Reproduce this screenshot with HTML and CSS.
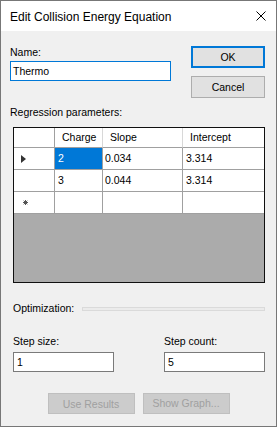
FILE: index.html
```html
<html>

<head>
    <link rel="stylesheet" href="styles.css">
</head>

<body>
    <div class="window">
        <div class="titlebar">
            <span class="title">Edit Collision Energy Equation</span>
            <svg class="close" width="10" height="10" viewBox="0 0 10 10">
                <path d="M0.5 0.5 L9.5 9.5 M9.5 0.5 L0.5 9.5" stroke="#000" stroke-width="1" fill="none" />
            </svg>
        </div>
        <div class="content">
            <div class="topRow">
                <div class="nameField">
                    <div class="label">Name:</div>
                    <div class="textbox focused">Thermo</div>
                </div>
                <div class="actions">
                    <div class="btn default">OK</div>
                    <div class="btn">Cancel</div>
                </div>
            </div>

            <div class="label regression">Regression parameters:</div>
            <div class="grid">
                <div class="gridRows">
                    <div class="row header">
                        <div class="cell rowHead"></div>
                        <div class="cell charge">Charge</div>
                        <div class="cell slope">Slope</div>
                        <div class="cell intercept">Intercept</div>
                    </div>
                    <div class="row">
                        <div class="cell rowHead"><span class="current"></span></div>
                        <div class="cell charge selected">2</div>
                        <div class="cell slope">0.034</div>
                        <div class="cell intercept">3.314</div>
                    </div>
                    <div class="row">
                        <div class="cell rowHead"></div>
                        <div class="cell charge">3</div>
                        <div class="cell slope">0.044</div>
                        <div class="cell intercept">3.314</div>
                    </div>
                    <div class="row">
                        <div class="cell rowHead">
                            <svg class="newRow" width="5" height="5" viewBox="0 0 5 5">
                                <path d="M2.5 0 V5 M0 2.5 H5 M0.7 0.7 L4.3 4.3 M4.3 0.7 L0.7 4.3" stroke="#555" stroke-width="1" />
                            </svg>
                        </div>
                        <div class="cell charge"></div>
                        <div class="cell slope"></div>
                        <div class="cell intercept"></div>
                    </div>
                </div>
            </div>

            <div class="optimization">
                <span class="label">Optimization:</span>
                <div class="rule"></div>
            </div>

            <div class="steps">
                <div class="stepField">
                    <div class="label">Step size:</div>
                    <div class="textbox">1</div>
                </div>
                <div class="stepField">
                    <div class="label">Step count:</div>
                    <div class="textbox">5</div>
                </div>
            </div>

            <div class="bottomButtons">
                <div class="btn disabled">Use Results</div>
                <div class="btn disabled graph">Show Graph...</div>
            </div>
        </div>
    </div>
</body>

</html>
```

FILE: styles.css
```css
body {
    margin: 0;
    padding: 0;
    font-family: "Liberation Sans", Arial, sans-serif;
    font-size: 10.5px;
    color: #000;
}

.window {
    width: 277px;
    height: 427px;
    box-sizing: border-box;
    border: 1px solid #777777;
    display: flex;
    flex-direction: column;
    background: #f0f0f0;
}

.titlebar {
    height: 30px;
    background: #fff;
    display: flex;
    align-items: center;
    padding: 0 10px 0 9px;
}

.title {
    font-family: "Liberation Sans", Arial, sans-serif;
    font-size: 12px;
    flex: 1;
    padding-top: 1px;
}

.close {
    display: block;
}

.content {
    flex: 1;
    padding: 15px 11px 0 9px;
}

.label {
    line-height: 13px;
    white-space: nowrap;
}

.topRow {
    display: flex;
    justify-content: space-between;
}

.nameField {
    width: 161px;
}

.nameField .label {
    margin-bottom: 2px;
}

.textbox {
    height: 20px;
    box-sizing: border-box;
    border: 1px solid #7a7a7a;
    background: #fff;
    padding: 1px 0 0 2px;
    line-height: 17px;
}

.textbox.focused {
    border-color: #0078d7;
}

.actions {
    display: flex;
    flex-direction: column;
    gap: 8px;
}

.btn {
    width: 74px;
    height: 22px;
    box-sizing: border-box;
    border: 1px solid #adadad;
    background: #e1e1e1;
    display: flex;
    align-items: center;
    justify-content: center;
}

.btn.default {
    border: 2px solid #0078d7;
}

.regression {
    margin-top: 8px;
}

.grid {
    margin: 8px 0 0 3px;
    width: 252px;
    height: 156px;
    box-sizing: border-box;
    border: 1px solid #101010;
    background: #ababab;
}

.gridRows {
    background: #fff;
}

.row {
    display: flex;
    height: 22px;
}

.row.header {
    height: 20px;
}

.cell {
    box-sizing: border-box;
    border-right: 1px solid #a0a0a0;
    border-bottom: 1px solid #a0a0a0;
    padding-left: 3px;
    line-height: 21px;
    white-space: nowrap;
}

.header .cell {
    line-height: 19px;
    padding-left: 7px;
    border-right-color: #d8d8d8;
}

.header .cell.rowHead {
    border-right-color: #a0a0a0;
}

.rowHead {
    width: 41px;
    display: flex;
    align-items: center;
    padding-left: 7px;
}

.charge {
    width: 48px;
}

.slope {
    width: 80px;
    padding-left: 2px;
}

.intercept {
    width: 81px;
    border-right: none;
}

.selected {
    background: #0078d7;
    color: #fff;
}

.current {
    display: block;
    width: 0;
    height: 0;
    border-left: 5px solid #333;
    border-top: 4.5px solid transparent;
    border-bottom: 4.5px solid transparent;
}

.newRow {
    display: block;
    margin-left: 2px;
}

.optimization {
    display: flex;
    align-items: center;
    margin: 19px 0 0 3px;
}

.rule {
    flex: 1;
    height: 2px;
    margin-left: 8px;
    border: 1px solid #dadada;
    background: #ebebeb;
}

.steps {
    display: flex;
    justify-content: space-between;
    margin: 20px 0 0 3px;
}

.stepField {
    width: 101px;
}

.stepField .label {
    margin-bottom: 4px;
}

.stepField .textbox {
    padding-left: 3px;
}

.bottomButtons {
    display: flex;
    justify-content: center;
    gap: 8px;
    margin: 21px 0 0 2px;
}

.btn.disabled {
    width: 87px;
    height: 21px;
    background: #cccccc;
    border-color: #bfbfbf;
    color: #a0a0a0;
}

.btn.graph {
    padding-bottom: 2px;
}
```
